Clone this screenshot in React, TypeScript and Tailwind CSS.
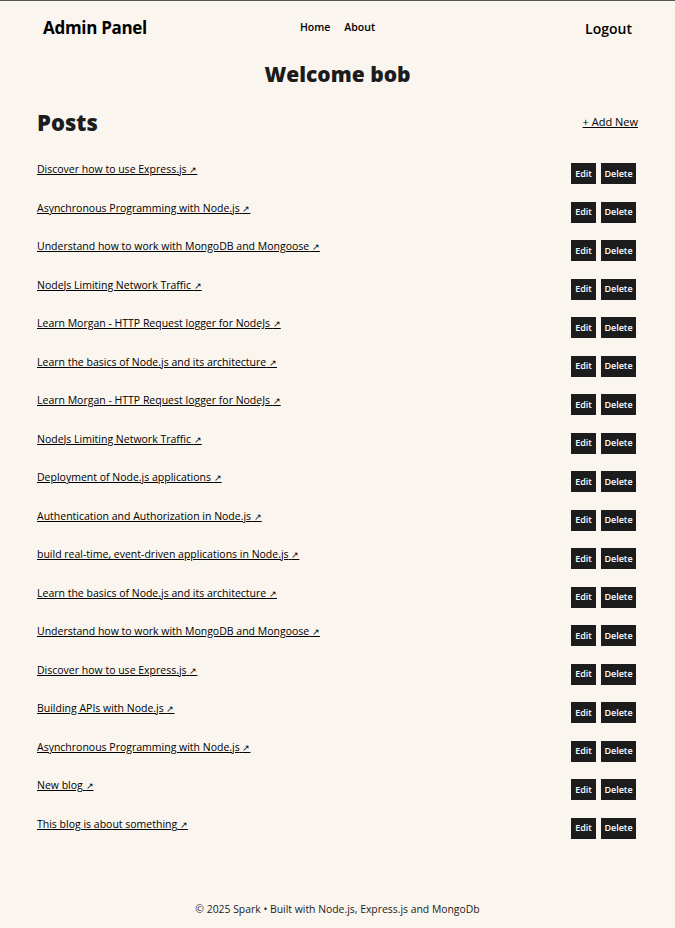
import React from "react";

const posts = [
  "Discover how to use Express.js",
  "Asynchronous Programming with Node.js",
  "Understand how to work with MongoDB and Mongoose",
  "NodeJs Limiting Network Traffic",
  "Learn Morgan - HTTP Request logger for NodeJs",
  "Learn the basics of Node.js and its architecture",
  "Learn Morgan - HTTP Request logger for NodeJs",
  "NodeJs Limiting Network Traffic",
  "Deployment of Node.js applications",
  "Authentication and Authorization in Node.js",
  "build real-time, event-driven applications in Node.js",
  "Learn the basics of Node.js and its architecture",
  "Understand how to work with MongoDB and Mongoose",
  "Discover how to use Express.js",
  "Building APIs with Node.js",
  "Asynchronous Programming with Node.js",
  "New blog",
  "This blog is about something",
];

export default function App() {
  return (
    <div
      className="min-h-[928px] bg-[#faf5ef] text-[#1c1c1c] border-t border-[#555]"
      style={{ fontFamily: '"Open Sans", "Noto Sans", sans-serif' }}
    >
      <div className="mx-auto w-[601px]">
        {/* header */}
        <header className="flex items-center h-[54px] px-[6px]">
          <div className="flex-1">
            <a href="#" className="text-[17px] font-bold text-black tracking-[-0.3px]">
              Admin Panel
            </a>
          </div>
          <nav className="flex gap-[14px] text-[10.5px] font-semibold text-black">
            <a href="#">Home</a>
            <a href="#">About</a>
          </nav>
          <div className="flex-1 flex justify-end">
            <a href="#" className="text-[14px] font-semibold text-black">
              Logout
            </a>
          </div>
        </header>

        <h2 className="text-center text-[21px] font-extrabold mt-[4px] leading-[30px]">
          Welcome bob
        </h2>

        <div className="flex items-center justify-between mt-[17px]">
          <h2 className="text-[22px] font-extrabold leading-[32px]">Posts</h2>
          <a href="#" className="text-[11px] underline text-black">
            + Add New
          </a>
        </div>

        <ul className="mt-[16px]">
          {posts.map((title, i) => (
            <li key={i} className="flex justify-between items-start h-[38.5px] pt-[6px]">
              <a href="#" className="text-[10.5px] leading-[16px] mt-[1px] underline text-black">
                {title} <span className="text-[9px]">↗</span>
              </a>
              <div className="flex gap-[5px] mt-[3px] mr-[2px]">
                <button className="bg-[#1c1c1c] text-white text-[9px] font-semibold w-[25px] h-[21px]">
                  Edit
                </button>
                <button className="bg-[#1c1c1c] text-white text-[9px] font-semibold w-[35px] h-[21px]">
                  Delete
                </button>
              </div>
            </li>
          ))}
        </ul>

        <footer className="text-center text-[10.4px] mt-[55px] pb-[14px]">
          © 2025 Spark • Built with Node.js, Express.js and MongoDb
        </footer>
      </div>
    </div>
  );
}
